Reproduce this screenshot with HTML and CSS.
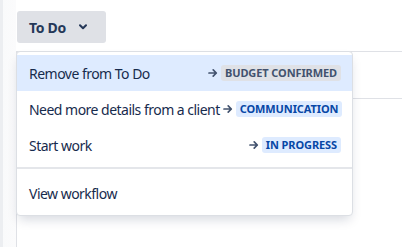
FILE: index.html
```html
<!DOCTYPE html>
<html>
<head>
<meta charset="utf-8">
<link rel="stylesheet" href="styles.css">
</head>
<body>
<div class="page">
  <div class="toolbar">
    <button class="status-btn"><span>To Do</span><svg class="chev" width="8" height="6" viewBox="0 0 8 6"><path d="M1 1.2 L4 4.2 L7 1.2" fill="none" stroke="#253858" stroke-width="2" stroke-linecap="round" stroke-linejoin="round"/></svg></button>
  </div>
  <div class="panel">
    <div class="panel-row"></div>
    <div class="panel-body"><div class="skeleton"></div></div>
  </div>
  <div class="menu">
    <div class="group">
      <div class="item active">
        <span class="label">Remove from To Do</span>
        <span class="target"><svg class="arrow" width="10" height="10" viewBox="0 0 10 10"><path d="M1 5 H8.3 M5.2 1.9 L8.3 5 L5.2 8.1" fill="none" stroke="#42526e" stroke-width="1.7" stroke-linecap="round" stroke-linejoin="round"/></svg><span class="lozenge grey">Budget confirmed</span></span>
      </div>
      <div class="item">
        <span class="label">Need more details from a client</span>
        <span class="target"><svg class="arrow" width="10" height="10" viewBox="0 0 10 10"><path d="M1 5 H8.3 M5.2 1.9 L8.3 5 L5.2 8.1" fill="none" stroke="#42526e" stroke-width="1.7" stroke-linecap="round" stroke-linejoin="round"/></svg><span class="lozenge blue">Communication</span></span>
      </div>
      <div class="item">
        <span class="label">Start work</span>
        <span class="target"><svg class="arrow" width="10" height="10" viewBox="0 0 10 10"><path d="M1 5 H8.3 M5.2 1.9 L8.3 5 L5.2 8.1" fill="none" stroke="#42526e" stroke-width="1.7" stroke-linecap="round" stroke-linejoin="round"/></svg><span class="lozenge blue">In progress</span></span>
      </div>
    </div>
    <div class="group sep">
      <div class="item"><span class="label">View workflow</span></div>
    </div>
  </div>
</div>
</body>
</html>
```

FILE: styles.css
```css
html, body {
  margin: 0;
  height: 100%;
}
body {
  background: linear-gradient(to right, #eceef1 0, #eceef1 3px, #f9fafb 3px, #fbfbfc 16px, #fff 16px);
  font-family: "Noto Sans", "Liberation Sans", sans-serif;
  color: #172b4d;
  overflow: hidden;
}
.page {
  position: relative;
  display: flex;
  flex-direction: column;
  padding: 11px 0 0 16px;
  height: 100%;
  box-sizing: border-box;
  overflow: hidden;
}
.toolbar {
  display: flex;
  padding-left: 1px;
}
.status-btn {
  display: flex;
  align-items: center;
  height: 32px;
  padding: 0 19px 0 12px;
  border: 0;
  border-radius: 3px;
  background: #dfe1e6;
  font-family: inherit;
  font-size: 14px;
  font-weight: 700;
  letter-spacing: -0.3px;
  color: #253858;
}
.chev {
  margin-left: 13px;
}
.panel {
  flex: 1;
  min-height: 0;
  margin-top: 8px;
  border-top: 1px solid #dfe1e6;
  border-left: 1px solid #dfe1e6;
  overflow: hidden;
}
.panel-row {
  height: 46px;
  border-bottom: 1px solid #dfe1e6;
}
.panel-body {
  padding: 148px 0 0 183px;
}
.skeleton {
  width: 90px;
  height: 8px;
  border-radius: 3px;
  background: #f4f5f7;
}
.menu {
  position: absolute;
  left: 16px;
  top: 51px;
  width: 337px;
  box-sizing: border-box;
  background: #fff;
  border: 1px solid #dcdfe4;
  border-radius: 4px;
  box-shadow: 0 6px 12px -3px rgba(9, 30, 66, 0.18);
}
.group {
  padding: 3px 0 4px;
}
.group.sep {
  border-top: 2px solid #e4e6ea;
  padding: 6px 0 4px;
}
.item {
  display: flex;
  align-items: center;
  height: 36px;
  padding: 0 11px 0 12px;
  font-size: 14px;
  letter-spacing: -0.52px;
  color: #172b4d;
}
.item.active {
  background: #deebff;
}
.label {
  white-space: nowrap;
}
.target {
  display: flex;
  align-items: center;
  margin-left: auto;
  padding-left: 3px;
  letter-spacing: 0;
}
.arrow {
  margin-right: 3px;
}
.lozenge {
  height: 16px;
  line-height: 16px;
  padding: 0 4px;
  border-radius: 3px;
  font-size: 11px;
  font-weight: 700;
  letter-spacing: -0.1px;
  text-transform: uppercase;
  white-space: nowrap;
}
.lozenge.grey {
  background: #dfe1e6;
  color: #42526e;
}
.lozenge.blue {
  background: #deebff;
  color: #0747a6;
}
```
